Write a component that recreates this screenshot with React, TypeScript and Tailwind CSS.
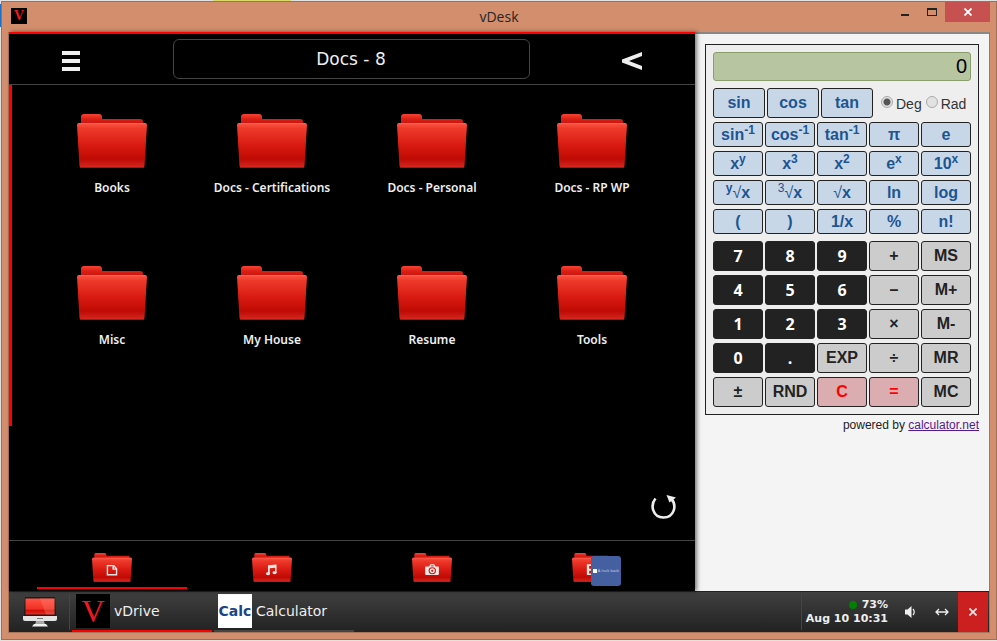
import React, { useState } from "react";
import type { ReactNode } from "react";

const verdana = "font-['Verdana','DejaVu_Sans',sans-serif]";
const arial = "font-['Liberation_Sans',Arial,sans-serif]";
const tahoma = "font-['Noto_Sans',sans-serif]";

const folders = [
  "Books",
  "Docs - Certifications",
  "Docs - Personal",
  "Docs - RP WP",
  "Misc",
  "My House",
  "Resume",
  "Tools",
];

function FolderIcon({ className, children }: { className: string; children?: ReactNode }) {
  return (
    <svg viewBox="0 0 70 54" className={className} preserveAspectRatio="none" aria-hidden="true">
      <defs>
        <linearGradient id="folderFront" x1="0" y1="0" x2="0" y2="1">
          <stop offset="0" stopColor="#fb5544" />
          <stop offset="0.12" stopColor="#ee3a2b" />
          <stop offset="0.5" stopColor="#d81a12" />
          <stop offset="0.8" stopColor="#c00a04" />
          <stop offset="1" stopColor="#d42a22" />
        </linearGradient>
        <linearGradient id="folderBack" x1="0" y1="0" x2="0" y2="1">
          <stop offset="0" stopColor="#f84434" />
          <stop offset="0.35" stopColor="#dc2015" />
          <stop offset="0.8" stopColor="#c0120a" />
        </linearGradient>
      </defs>
      <path
        d="M4 12V3Q4 0 7 0H22Q25 0 25 3V5H63Q66 5 66 8V14H4Z"
        fill="url(#folderBack)"
      />
      <path
        d="M0 11Q0 9 2 9H68Q70 9 70 11L67.500 52Q67.300 54 65.500 54H4.500Q2.700 54 2.500 52Z"
        fill="url(#folderFront)"
      />
      <path d="M1.500 9.500H68.500" stroke="#f46a5a" strokeWidth="0.700" />
      <path d="M3 53.500H67" stroke="#a80c06" strokeWidth="0.800" />
      {children}
    </svg>
  );
}

function DocGlyph() {
  return (
    <path
      d="M27 23.500H38L43 29.500V40.500H27ZM37 23.500V30H43"
      fill="none"
      stroke="#f3e8e6"
      strokeWidth="2.400"
    />
  );
}

function MusicGlyph() {
  return (
    <g fill="#f3e8e6">
      <path d="M28 23L43 21.500V37H40.500V27.500L31 28.500V39H28Z" />
      <ellipse cx="28" cy="38.500" rx="3.600" ry="2.700" />
      <ellipse cx="39.500" cy="36.800" rx="3.600" ry="2.700" />
    </g>
  );
}

function CameraGlyph() {
  return (
    <g>
      <path
        d="M24 25H30L32 21H39L41 25H46Q47 25 47 26V39Q47 41 45 41H25Q23 41 23 39V26Q23 25 24 25Z"
        fill="#f3e8e6"
      />
      <circle cx="35.500" cy="33" r="5.500" fill="none" stroke="#c8160e" strokeWidth="2" />
      <circle cx="35.500" cy="33" r="2" fill="#c8160e" />
      <path d="M33 24H38" stroke="#c8160e" strokeWidth="1.500" />
    </g>
  );
}

function FilmGlyph() {
  return (
    <g>
      <path d="M26 21H46V41H26Z" fill="#f3e8e6" />
      <path
        d="M30 24H42V29.500H30ZM30 33H42V38H30Z"
        fill="#c8160e"
      />
    </g>
  );
}

const libraries = [
  { name: "Documents", glyph: <DocGlyph /> },
  { name: "Music", glyph: <MusicGlyph /> },
  { name: "Pictures", glyph: <CameraGlyph /> },
  { name: "Videos", glyph: <FilmGlyph /> },
];

function VLogo({ className }: { className: string }) {
  return (
    <span
      className={`flex items-center justify-center bg-black font-['Liberation_Serif',serif] text-[#f01820] ${className}`}
    >
      V
    </span>
  );
}

function TitleBar() {
  return (
    <header className="grid h-[30px] shrink-0 grid-cols-[1fr_auto_1fr] items-start">
      <div className="px-[9px] pt-[6px]">
        <VLogo className="size-4 text-sm leading-none font-bold" />
      </div>
      <h1 className="font-['Open_Sans',sans-serif] text-sm leading-[30px] text-[#262626]">vDesk</h1>
      <div className="flex items-start justify-end pr-[6px]">
        <button aria-label="Minimize" className="flex h-5 w-7 items-center justify-center">
          <span className="mt-[6px] h-[2px] w-2 bg-[#222]" />
        </button>
        <button aria-label="Maximize" className="flex h-5 w-[26px] items-center justify-center">
          <span className="h-2 w-[10px] border border-t-2 border-[#222]" />
        </button>
        <button aria-label="Close" className="flex h-5 w-[45px] items-center justify-center bg-[#c75050]">
          <svg viewBox="0 0 8 8" className="size-2" aria-hidden="true">
            <path d="M0.500 0.500L7.500 7.500M7.500 0.500L0.500 7.500" stroke="white" strokeWidth="1.800" />
          </svg>
        </button>
      </div>
    </header>
  );
}

function DrivePane() {
  return (
    <main className="relative z-10 flex min-w-0 flex-1 flex-col border-t-2 border-[#ff0000] bg-black text-[#eee] shadow-[2px_0_4px_rgba(0,0,0,0.5)]">
      <div className="flex h-[51px] shrink-0 items-center justify-between border-b border-[#444] px-[53px]">
        <button aria-label="Menu" className="flex w-[18px] flex-col gap-1 pt-1">
          <span className="h-1 w-full bg-[#eee]" />
          <span className="h-1 w-full bg-[#eee]" />
          <span className="h-1 w-full bg-[#eee]" />
        </button>
        <h2
          className={`flex h-10 w-[357px] items-center justify-center rounded-md border border-[#444] pt-[2px] text-[17px] ${verdana}`}
        >
          Docs - 8
        </h2>
        <button aria-label="Back" className="pt-1">
          <svg viewBox="0 0 20 18" className="h-[18px] w-5" aria-hidden="true">
            <path d="M20 0V4L7 9L20 14V18L0 10.500V7.500Z" fill="#eee" />
          </svg>
        </button>
      </div>

      <section className="relative flex min-h-0 flex-1">
        <div className="h-3/4 w-[3px] bg-[#ff0000]" />
        <ul className="grid flex-1 auto-rows-[152px] grid-cols-4 pr-[23px] pl-5 pt-[29px]">
          {folders.map((name) => (
            <li key={name}>
              <button className="flex w-full flex-col items-center gap-[10px]">
                <FolderIcon className="h-[54px] w-[70px]" />
                <span className={`text-xs leading-5 font-semibold whitespace-nowrap ${tahoma}`}>{name}</span>
              </button>
            </li>
          ))}
        </ul>
        <button aria-label="Refresh" className="absolute right-[19px] bottom-[21px]">
          <svg viewBox="0 0 25 25" className="size-[25px]" aria-hidden="true">
            <path
              d="M4.500 4.500C-1 11 1.500 23.500 12.500 23.500C23 23.500 26.500 11.500 20 4.500"
              fill="none"
              stroke="#eee"
              strokeWidth="2.600"
            />
            <path d="M15.500 1L25 3.500L18.500 8.500Z" fill="#eee" />
          </svg>
        </button>
      </section>

      <nav className="h-[51px] shrink-0 border-t border-[#444] px-[23px]">
        <ul className="grid h-full grid-cols-4">
          {libraries.map((lib, i) => (
            <li key={lib.name} className="relative flex justify-center">
              <button
                aria-label={lib.name}
                className={`mb-[2px] flex w-[150px] justify-center border-b-2 pt-3 ${
                  i === 0 ? "border-[#ff0000]" : "border-transparent"
                }`}
              >
                <FolderIcon className="h-[29px] w-10">{lib.glyph}</FolderIcon>
              </button>
              {i === 3 && (
                <span className="absolute top-[15px] left-[79px] flex size-[30px] items-center justify-center gap-[1px] rounded-[3px] bg-[#4460a0] text-[4px] text-[#c5cfe4]">
                  <span className="size-1 bg-white" />
                  A look back
                </span>
              )}
            </li>
          ))}
        </ul>
      </nav>
    </main>
  );
}

type KeyKind = "fn" | "digit" | "op" | "clear";

const keyStyles: Record<KeyKind, string> = {
  fn: "h-[25px] bg-[#c8d7e8] text-[#1c5591]",
  digit: "h-[30px] bg-[#222] text-white font-['Open_Sans',sans-serif]",
  op: "h-[30px] bg-[#ccc] text-[#222]",
  clear: "h-[30px] bg-[#dbacb0] text-[#ff0000]",
};

function Key({ kind, children }: { kind: KeyKind; children: ReactNode }) {
  return (
    <button
      className={`flex items-center justify-center rounded-[3px] border border-[#222] text-base leading-none font-bold whitespace-nowrap ${keyStyles[kind]}`}
    >
      <span>{children}</span>
    </button>
  );
}

const root = <span className="font-normal">√</span>;

const functionKeys: ReactNode[] = [
  <>sin<sup>-1</sup></>,
  <>cos<sup>-1</sup></>,
  <>tan<sup>-1</sup></>,
  "π",
  "e",
  <>x<sup>y</sup></>,
  <>x<sup>3</sup></>,
  <>x<sup>2</sup></>,
  <>e<sup>x</sup></>,
  <>10<sup>x</sup></>,
  <><sup>y</sup>{root}x</>,
  <><sup className="font-normal">3</sup>{root}x</>,
  <>{root}x</>,
  "ln",
  "log",
  "(",
  ")",
  "1/x",
  "%",
  "n!",
];

const numberKeys = [
  "7", "8", "9", "+", "MS",
  "4", "5", "6", "–", "M+",
  "1", "2", "3", "×", "M-",
  "0", ".", "EXP", "÷", "MR",
  "±", "RND", "C", "=", "MC",
];

function keyKind(label: string): KeyKind {
  if (/^[0-9.]$/.test(label)) return "digit";
  if (label === "C" || label === "=") return "clear";
  return "op";
}

function Calculator() {
  const [unit, setUnit] = useState("Deg");
  return (
    <aside className={`w-[294px] shrink-0 border-t-2 border-[#888] bg-[#f4f4f4] px-[10px] pt-[10px] ${arial}`}>
      <div className="border border-[#222] bg-[#eee] p-[7px]">
        <input
          aria-label="Result"
          readOnly
          value="0"
          className="block h-[29px] w-full rounded-[3px] border border-[#8a9e6c] bg-[#b7c5a1] px-[3px] text-right text-xl leading-none text-black"
        />
        <div className="mt-[7px] flex gap-[2px]">
          {["sin", "cos", "tan"].map((k) => (
            <button
              key={k}
              className="h-[30px] w-[52px] rounded-[3px] border border-[#222] bg-[#c8d7e8] text-base leading-none font-bold text-[#1c5591]"
            >
              {k}
            </button>
          ))}
          <div className="flex flex-1 items-center gap-1 pt-[2px] pl-[6px] text-sm text-[#333]">
            {["Deg", "Rad"].map((u) => (
              <label key={u} className="flex items-center gap-[3px]">
                <input
                  type="radio"
                  name="unit"
                  checked={unit === u}
                  onChange={() => setUnit(u)}
                  className="mb-1 size-3 appearance-none rounded-full border border-[#aaa] bg-[#e2e2e2] checked:bg-[radial-gradient(circle,#555_0_3px,#e2e2e2_4px)]"
                />
                {u}
              </label>
            ))}
          </div>
        </div>
        <div className="mt-1 grid grid-cols-5 gap-x-[2px] gap-y-1">
          {functionKeys.map((k, i) => (
            <Key key={i} kind="fn">{k}</Key>
          ))}
        </div>
        <div className="mt-[7px] grid grid-cols-5 gap-x-[2px] gap-y-1">
          {numberKeys.map((k) => (
            <Key key={k} kind={keyKind(k)}>{k}</Key>
          ))}
        </div>
      </div>
      <p className="pt-[2px] text-right text-xs text-[#222]">
        powered by{" "}
        <a href="#calculator" className="text-[#551a8b] underline">
          calculator.net
        </a>
      </p>
    </aside>
  );
}

function MonitorIcon() {
  return (
    <svg viewBox="0 0 34 30" className="h-[30px] w-[34px]" aria-hidden="true">
      <defs>
        <linearGradient id="screen" x1="0" y1="0" x2="0" y2="1">
          <stop offset="0" stopColor="#ff5446" />
          <stop offset="0.65" stopColor="#f03024" />
          <stop offset="0.75" stopColor="#d01008" />
          <stop offset="1" stopColor="#e82a20" />
        </linearGradient>
      </defs>
      <path d="M2 0H32L33 19H1Z" fill="#1c1a1a" />
      <path d="M2.500 1.500H31.500V17.500H2.500Z" fill="url(#screen)" />
      <path d="M17 1.500H31.500V17.500H23Z" fill="#ff8074" opacity="0.350" />
      <path d="M0 19H34V22Q34 24 32 24H2Q0 24 0 22Z" fill="#e4e4e4" />
      <path d="M14 21.500H20" stroke="#777" strokeWidth="1" />
      <path d="M13 24H21L22 27.500H12Z" fill="#a9a9a9" />
      <path d="M11 27H23L25 29.500H9Z" fill="#f2f2f2" />
    </svg>
  );
}

function Taskbar() {
  return (
    <footer
      className={`flex h-[41px] shrink-0 border-t border-[#222] bg-linear-to-b from-[#404040] to-[#222] text-[#eee] ${verdana}`}
    >
      <button aria-label="Show desktop" className="my-[2px] flex w-[61px] items-center justify-center border-r border-[#444] pl-[2px]">
        <MonitorIcon />
      </button>
      <button className="ml-[2px] flex w-[140px] items-center gap-1 border-b-2 border-[#ff0000] px-1 text-sm">
        <VLogo className="size-[34px] text-[32px] leading-none" />
        vDrive
      </button>
      <button className="ml-[2px] flex w-[140px] items-center gap-1 border-b-2 border-[#444] px-1 text-sm">
        <span className="flex size-[34px] items-center justify-center overflow-hidden bg-white text-sm font-bold text-[#1c4587]">
          Calc
        </span>
        Calculator
      </button>
      <div className="my-[2px] ml-auto flex flex-col items-end justify-center border-l border-[#444] pl-1 text-[11px] leading-[14px] font-bold">
        <span className="flex items-center gap-[5px]">
          <span className="size-2 rounded-full bg-[#008000]" />
          73%
        </span>
        <time>Aug 10 10:31</time>
      </div>
      <button aria-label="Volume" className="ml-[6px] flex w-8 items-center justify-center">
        <svg viewBox="0 0 10 12" className="h-3 w-[10px]" aria-hidden="true">
          <path d="M0 3.500H2.500L6.500 0V12L2.500 8.500H0Z" fill="#eee" />
          <path d="M8 3Q10.500 6 8 9" fill="none" stroke="#eee" strokeWidth="1.200" />
        </svg>
      </button>
      <button aria-label="Resize" className="flex w-8 items-center justify-center">
        <svg viewBox="0 0 14 8" className="h-2 w-[14px]" aria-hidden="true">
          <path d="M1 4H13M4 1L1 4L4 7M10 1L13 4L10 7" fill="none" stroke="#eee" strokeWidth="1.300" />
        </svg>
      </button>
      <button aria-label="Exit" className="mr-[1px] flex w-[30px] items-center justify-center bg-[#cc2020]">
        <svg viewBox="0 0 8 8" className="size-2" aria-hidden="true">
          <path d="M0.500 0.500L7.500 7.500M7.500 0.500L0.500 7.500" stroke="#eee" strokeWidth="1.600" />
        </svg>
      </button>
    </footer>
  );
}

export default function App() {
  return (
    <div className="relative flex h-screen min-h-[560px] flex-col bg-[#e2e2e2] py-[1px] pl-[1px]">
      <span className="absolute top-0 left-[213px] h-[1px] w-[78px] bg-[#dada6a]" />
      <span className="absolute top-1 left-0 h-[23px] w-[1px] bg-[#1a70c8]" />
      <div className="flex min-h-0 flex-1 flex-col border border-[#a06f57] bg-[#d28e6d]">
        <TitleBar />
        <div className="mx-[6px] mb-[6px] flex min-h-0 flex-1 flex-col border border-t-0 border-[#a8745a]">
          <div className="flex min-h-0 flex-1">
            <DrivePane />
            <Calculator />
          </div>
          <Taskbar />
        </div>
      </div>
    </div>
  );
}
